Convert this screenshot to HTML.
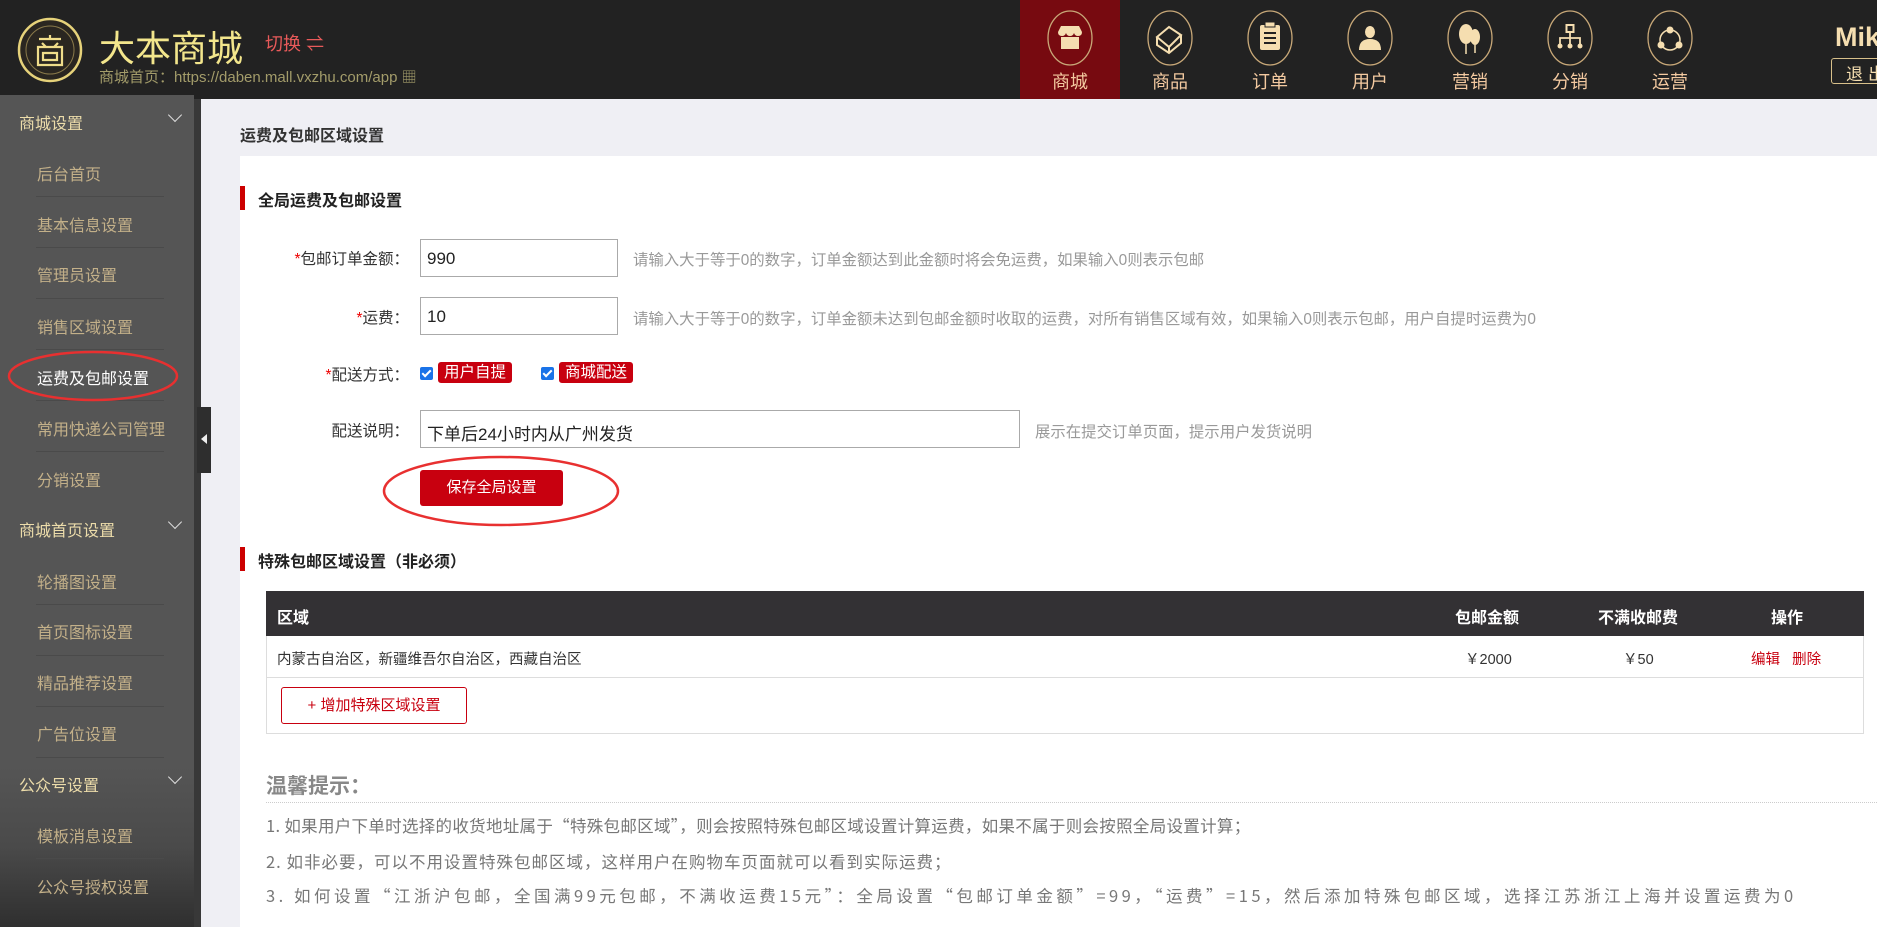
<!DOCTYPE html>
<html><head><meta charset="utf-8"><style>
*{margin:0;padding:0;box-sizing:border-box}
body{width:1877px;height:927px;overflow:hidden;background:#efeff4;font-family:"Liberation Sans","Noto Sans CJK SC",sans-serif;position:relative}
.a{position:absolute;white-space:nowrap}
#hd{position:absolute;left:0;top:0;width:1877px;height:99px;background:#222}
.nav{position:absolute;top:0;width:100px;height:99px;text-align:center}
.nav svg{position:absolute;left:27px;top:10px}
.nav span{position:absolute;left:0;width:100px;top:68px;font-size:18px;color:#f3c9a0}
#sb{position:absolute;left:0;top:95px;width:194px;height:832px;background:#555}
#sb .h{position:absolute;left:19px;font-size:16px;color:#ecdcaa}
#sb .i{position:absolute;left:37px;font-size:16px;color:#c3b089}
#sb .ln{position:absolute;left:36px;width:128px;height:1px;background:#4a4a4a}
.chev{position:absolute;left:170px;width:10px;height:10px;border-right:1.5px solid #ddd;border-bottom:1.5px solid #ddd;transform:rotate(45deg)}
#panel{position:absolute;left:240px;top:156px;width:1637px;height:771px;background:#fff}
.bar{position:absolute;left:240px;width:5px;background:#c00}
.tt{position:absolute;left:258px;font-size:16px;font-weight:bold;color:#222}
.lbl{position:absolute;right:1468px;font-size:15.5px;color:#333;text-align:right}
.lbl b{color:#e00;font-weight:normal}
.inp{position:absolute;left:420px;height:38px;border:1px solid #aaa;font-size:17px;padding:9px 6px;color:#222}
.hint{position:absolute;left:633px;font-size:15.4px;color:#999}
.tag{position:absolute;height:21px;background:#c8000f;color:#fff;font-size:15.5px;line-height:21px;padding:0 6px;border-radius:3px}
.cb{position:absolute;width:13px;height:13px;background:#1a73e8;border-radius:2px}
.cb:after{content:"";position:absolute;left:4px;top:1px;width:3px;height:7px;border-right:2px solid #fff;border-bottom:2px solid #fff;transform:rotate(45deg)}
.th{position:absolute;top:591px;font-size:16px;font-weight:bold;color:#fff}
.tip{position:absolute;left:266px;font-size:16.5px;color:#777;font-family:"Noto Sans CJK SC",sans-serif}
</style></head><body>
<div id="hd"></div>
<svg class="a" style="left:17px;top:17px" width="66" height="66" viewBox="0 0 66 66"><circle cx="33" cy="33" r="31" fill="#2a2620" stroke="#e6d27a" stroke-width="2.5"/><circle cx="33" cy="33" r="24" fill="none" stroke="#8a7a4a" stroke-width="1"/><g fill="none" stroke="#f0dd8a" stroke-width="2.2"><path d="M33 18v4M22 22h22M25 26l4 4M41 26l-4 4M21 30h24v18H21z M26 36h14v7H26z"/></g></svg>
<div class="a" style="left:99px;top:20px;font-size:36px;color:#f3e68c">大本商城</div>
<div class="a" style="left:265px;top:30px;font-size:18px;color:#e85a5a">切换 ⇌</div>
<div class="a" style="left:99px;top:66px;font-size:15px;color:#a39c6a">商城首页：https://daben.mall.vxzhu.com/app ▦</div>

<div class="nav" style="left:1020px;background:#770a10"><svg width="46" height="56" viewBox="0 0 46 56"><ellipse cx="23" cy="28" rx="22" ry="27" fill="none" stroke="#c8a878" stroke-width="1.3"/><path d="M11 22l3-6h18l3 6q0 4-4 4q-3 0-4-3q-1 3-4 3q-3 0-4-3q-1 3-4 3q-4 0-4-4z M14 27h18v12H14z" fill="#f5deb0"/></svg><span>商城</span></div>
<div class="nav" style="left:1120px"><svg width="46" height="56" viewBox="0 0 46 56"><ellipse cx="23" cy="28" rx="22" ry="27" fill="none" stroke="#c8a878" stroke-width="1.3"/><path d="M10 27l12-10 12 8-12 12zM10 27v8l12 8 12-10v-8M22 37v6" fill="none" stroke="#f5deb0" stroke-width="2"/></svg><span>商品</span></div>
<div class="nav" style="left:1220px"><svg width="46" height="56" viewBox="0 0 46 56"><ellipse cx="23" cy="28" rx="22" ry="27" fill="none" stroke="#c8a878" stroke-width="1.3"/><rect x="13" y="15" width="20" height="25" rx="2" fill="#f5deb0"/><rect x="18" y="12" width="10" height="5" fill="#f5deb0" stroke="#222"/><path d="M17 23h12M17 28h12M17 33h12" stroke="#222" stroke-width="2"/></svg><span>订单</span></div>
<div class="nav" style="left:1320px"><svg width="46" height="56" viewBox="0 0 46 56"><ellipse cx="23" cy="28" rx="22" ry="27" fill="none" stroke="#c8a878" stroke-width="1.3"/><ellipse cx="23" cy="22" rx="5" ry="6" fill="#f5deb0"/><path d="M12 40q0-11 11-11q11 0 11 11z" fill="#f5deb0"/></svg><span>用户</span></div>
<div class="nav" style="left:1420px"><svg width="46" height="56" viewBox="0 0 46 56"><ellipse cx="23" cy="28" rx="22" ry="27" fill="none" stroke="#c8a878" stroke-width="1.3"/><ellipse cx="19" cy="24" rx="7" ry="10" fill="#f5deb0"/><ellipse cx="28" cy="27" rx="5" ry="8" fill="#f5deb0"/><path d="M19 34v10M28 35v8" stroke="#f5deb0" stroke-width="1.5"/></svg><span>营销</span></div>
<div class="nav" style="left:1520px"><svg width="46" height="56" viewBox="0 0 46 56"><ellipse cx="23" cy="28" rx="22" ry="27" fill="none" stroke="#c8a878" stroke-width="1.3"/><rect x="19.5" y="15" width="7" height="7" fill="none" stroke="#f5deb0" stroke-width="2"/><path d="M23 22v6M13 34v-6h20v6M23 28v6" fill="none" stroke="#f5deb0" stroke-width="1.8"/><circle cx="13" cy="36" r="2.5" fill="#f5deb0"/><circle cx="23" cy="36" r="2.5" fill="#f5deb0"/><circle cx="33" cy="36" r="2.5" fill="#f5deb0"/></svg><span>分销</span></div>
<div class="nav" style="left:1620px"><svg width="46" height="56" viewBox="0 0 46 56"><ellipse cx="23" cy="28" rx="22" ry="27" fill="none" stroke="#c8a878" stroke-width="1.3"/><circle cx="23" cy="30" r="10" fill="none" stroke="#f5deb0" stroke-width="1.5"/><circle cx="23" cy="20" r="3.5" fill="#f5deb0"/><circle cx="14" cy="35" r="3.5" fill="#f5deb0"/><circle cx="32" cy="35" r="3.5" fill="#f5deb0"/></svg><span>运营</span></div>
<div class="a" style="left:1835px;top:22px;font-size:27px;font-weight:bold;color:#f5deb0">Mik</div>
<div class="a" style="left:1831px;top:58px;width:60px;height:26px;border:1px solid #d8c08a;border-radius:3px;color:#f5deb0;font-size:17px;padding:1px 0 0 14px;letter-spacing:5px">退出</div>

<div class="a" style="left:0;top:99px;width:194px;height:828px;background:#555"></div>
<div id="sb">
<div style="position:absolute;left:0;bottom:0;width:194px;height:160px;background:linear-gradient(180deg,#555 0%,#4a4a4a 50%,#2f2f2f 100%)"></div>
<div class="h" style="top:15px">商城设置</div><div class="chev" style="top:15px"></div>
<div class="i" style="top:66px">后台首页</div><div class="ln" style="top:101px"></div>
<div class="i" style="top:117px">基本信息设置</div><div class="ln" style="top:152px"></div>
<div class="i" style="top:167px">管理员设置</div><div class="ln" style="top:203px"></div>
<div class="i" style="top:219px">销售区域设置</div><div class="ln" style="top:254px"></div>
<div class="i" style="top:270px;color:#fff">运费及包邮设置</div><div class="ln" style="top:305px"></div>
<div class="i" style="top:321px">常用快递公司管理</div><div class="ln" style="top:356px"></div>
<div class="i" style="top:372px">分销设置</div>
<div class="h" style="top:422px">商城首页设置</div><div class="chev" style="top:422px"></div>
<div class="i" style="top:474px">轮播图设置</div><div class="ln" style="top:509px"></div>
<div class="i" style="top:524px">首页图标设置</div><div class="ln" style="top:560px"></div>
<div class="i" style="top:575px">精品推荐设置</div><div class="ln" style="top:611px"></div>
<div class="i" style="top:626px">广告位设置</div><div class="ln" style="top:662px"></div>
<div class="h" style="top:677px">公众号设置</div><div class="chev" style="top:677px"></div>
<div class="i" style="top:728px">模板消息设置</div><div class="ln" style="top:763px"></div>
<div class="i" style="top:779px">公众号授权设置</div>
</div>
<div class="a" style="left:194px;top:99px;width:7px;height:828px;background:#383838"></div>
<div class="a" style="left:197px;top:407px;width:14px;height:66px;background:#2e2e2e"></div>
<div class="a" style="left:201px;top:434px;width:0;height:0;border-top:5px solid transparent;border-bottom:5px solid transparent;border-right:6px solid #eee"></div>
<svg class="a" style="left:7px;top:350px" width="172" height="52"><ellipse cx="86" cy="26" rx="84" ry="24" fill="none" stroke="#e83030" stroke-width="2.5"/></svg>

<div class="a" style="left:240px;top:122px;font-size:16px;font-weight:bold;color:#333">运费及包邮区域设置</div>
<div id="panel"></div>
<div class="bar" style="top:186px;height:24px"></div>
<div class="tt" style="top:187px">全局运费及包邮设置</div>

<div class="lbl" style="top:247px"><b>*</b>包邮订单金额：</div>
<div class="inp" style="top:239px;width:198px">990</div>
<div class="hint" style="top:248px">请输入大于等于0的数字，订单金额达到此金额时将会免运费，如果输入0则表示包邮</div>
<div class="lbl" style="top:306px"><b>*</b>运费：</div>
<div class="inp" style="top:297px;width:198px">10</div>
<div class="hint" style="top:307px">请输入大于等于0的数字，订单金额未达到包邮金额时收取的运费，对所有销售区域有效，如果输入0则表示包邮，用户自提时运费为0</div>
<div class="lbl" style="top:363px"><b>*</b>配送方式：</div>
<div class="cb" style="left:420px;top:367px"></div><div class="tag" style="left:438px;top:362px">用户自提</div>
<div class="cb" style="left:541px;top:367px"></div><div class="tag" style="left:559px;top:362px">商城配送</div>
<div class="lbl" style="top:419px">配送说明：</div>
<div class="inp" style="top:410px;width:600px">下单后24小时内从广州发货</div>
<div class="hint" style="top:420px;left:1035px">展示在提交订单页面，提示用户发货说明</div>
<div class="a" style="left:420px;top:470px;width:143px;height:36px;background:#c8000f;border-radius:3px;color:#fff;font-size:15px;text-align:center;line-height:36px">保存全局设置</div>
<svg class="a" style="left:381px;top:455px" width="240" height="72"><ellipse cx="120" cy="36" rx="117" ry="34" fill="none" stroke="#e83030" stroke-width="2.5"/></svg>

<div class="bar" style="top:547px;height:24px"></div>
<div class="tt" style="top:548px">特殊包邮区域设置（非必须）</div>
<div class="a" style="left:266px;top:591px;width:1598px;height:143px;border:1px solid #ddd"></div>
<div class="a" style="left:266px;top:591px;width:1598px;height:45px;background:#333134"></div>
<div class="th" style="left:277px;top:604px">区域</div>
<div class="th" style="left:1455px;top:604px">包邮金额</div>
<div class="th" style="left:1598px;top:604px">不满收邮费</div>
<div class="th" style="left:1771px;top:604px">操作</div>
<div class="a" style="left:277px;top:648px;font-size:14.5px;color:#333">内蒙古自治区，新疆维吾尔自治区，西藏自治区</div>
<div class="a" style="left:1465px;top:648px;font-size:14.5px;color:#333">￥2000</div>
<div class="a" style="left:1623px;top:648px;font-size:14.5px;color:#333">￥50</div>
<div class="a" style="left:1751px;top:648px;font-size:14.5px;color:#c8000f">编辑&nbsp;&nbsp;&nbsp;删除</div>
<div class="a" style="left:266px;top:677px;width:1598px;height:1px;background:#ddd"></div>
<div class="a" style="left:281px;top:687px;width:186px;height:37px;border:1px solid #c8000f;border-radius:3px;color:#c8000f;font-size:15px;line-height:35px;text-align:center">+ 增加特殊区域设置</div>

<div class="a" style="left:266px;top:770px;font-size:21px;font-weight:bold;color:#888">温馨提示：</div>
<div class="a" style="left:266px;top:802px;width:1611px;border-top:1px dotted #ccc"></div>
<div class="tip a" style="top:813px;letter-spacing:0.3px">1. 如果用户下单时选择的收货地址属于“特殊包邮区域”，则会按照特殊包邮区域设置计算运费，如果不属于则会按照全局设置计算；</div>
<div class="tip a" style="top:849px;letter-spacing:1px">2. 如非必要，可以不用设置特殊包邮区域，这样用户在购物车页面就可以看到实际运费；</div>
<div class="tip a" style="top:883px;letter-spacing:3.5px">3. 如何设置“江浙沪包邮，全国满99元包邮，不满收运费15元”：全局设置“包邮订单金额”=99，“运费”=15，然后添加特殊包邮区域，选择江苏浙江上海并设置运费为0</div>
</body></html>
